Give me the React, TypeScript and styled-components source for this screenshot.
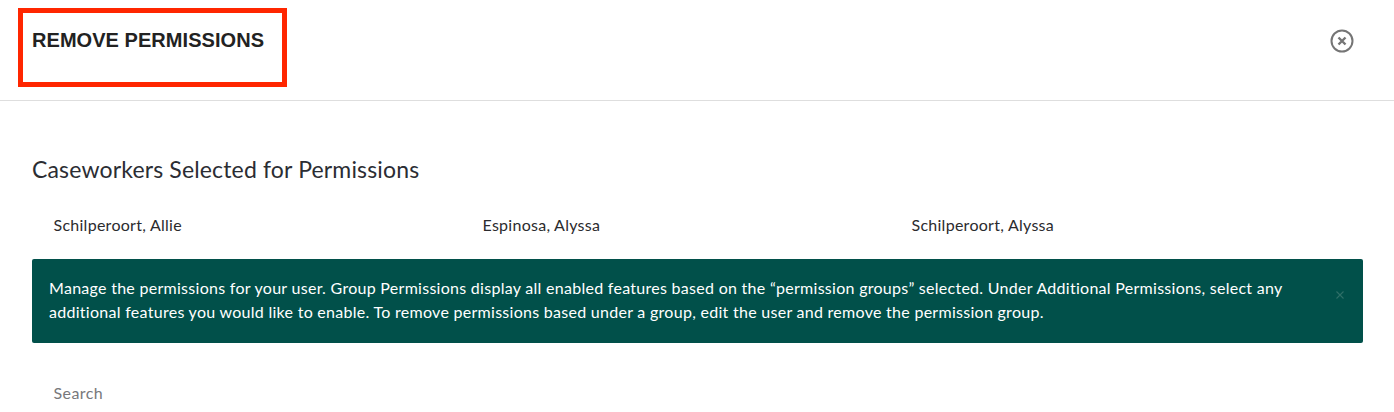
import React from "react";
import styled, { createGlobalStyle } from "styled-components";

const Global = createGlobalStyle`
  html, body { margin: 0; padding: 0; background: #fff; height: 412px; overflow: hidden; }
  body { font-family: Lato, "Open Sans", "Liberation Sans", sans-serif; color: #2b2b2e; }
`;
const Header = styled.header`
  position: relative;
  height: 100px;
  border-bottom: 1px solid #dedede;
  display: flex;
  justify-content: space-between;
  align-items: flex-start;
  padding: 0 40px 0 32px;
`;
const Title = styled.h1`
  margin: 28px 0 0;
  font: bold 20px/24px "Liberation Sans", Arial, sans-serif;
  letter-spacing: 0.05px;
  color: #222;
`;
const Annotation = styled.div`
  position: absolute;
  left: 18px;
  top: 8px;
  width: 269px;
  height: 79px;
  box-sizing: border-box;
  border: 5px solid #ff2600;
`;
const CloseButton = styled.button`
  margin: 29px 0 0;
  padding: 0;
  width: 24px;
  height: 24px;
  background: none;
  border: 0;
  display: block;
`;
const Body = styled.main`
  padding: 55px 31px 0 32px;
`;
const Heading = styled.h2`
  margin: 0;
  font-size: 23px;
  line-height: 26px;
  font-weight: 400;
  letter-spacing: 0.16px;
  color: #2b2d33;
`;
const Names = styled.ul`
  list-style: none;
  margin: 33px 0 0;
  padding: 0 0 0 21.5px;
  display: grid;
  grid-template-columns: 429px 429px 1fr;
  font-size: 16px;
  line-height: 20px;
  letter-spacing: 0.27px;
  color: #2b2b2e;
`;
const Alert = styled.div`
  position: relative;
  margin-top: 24px;
  box-sizing: border-box;
  height: 84px;
  background: #01504a;
  border-radius: 2px;
  color: #fff;
  padding: 17px 70px 0 17px;
  font-size: 16px;
  line-height: 24px;
  letter-spacing: 0.28px;
`;
const Dismiss = styled.span`
  position: absolute;
  right: 19px;
  top: 22px;
  width: 8px;
  height: 8px;
  display: block;
`;
const Search = styled.div`
  margin: 40px 0 0 21.5px;
  font-size: 16px;
  line-height: 20px;
  letter-spacing: 0.4px;
  color: #77787b;
`;

export default function App() {
  return (
    <>
      <Global />
      <Header>
        <Title>REMOVE PERMISSIONS</Title>
        <Annotation />
        <CloseButton aria-label="Close">
          <svg width="24" height="24" viewBox="0 0 24 24" fill="none" stroke="#757575">
            <circle cx="12" cy="12" r="10.5" strokeWidth="2" />
            <path d="M8.5 8.5l7 7M15.5 8.5l-7 7" strokeWidth="2.4" />
          </svg>
        </CloseButton>
      </Header>
      <Body>
        <Heading>Caseworkers Selected for Permissions</Heading>
        <Names>
          <li>Schilperoort, Allie</li>
          <li>Espinosa, Alyssa</li>
          <li>Schilperoort, Alyssa</li>
        </Names>
        <Alert>
          Manage the permissions for your user. Group Permissions display all enabled features based on the “permission groups” selected. Under Additional Permissions, select any additional features you would like to enable. To remove permissions based under a group, edit the user and remove the permission group.
          <Dismiss>
            <svg width="8" height="8" viewBox="0 0 8 8" fill="none" stroke="#2f6f68" strokeWidth="1.1">
              <path d="M0.5 0.5l7 7M7.5 0.5l-7 7" />
            </svg>
          </Dismiss>
        </Alert>
        <Search>Search</Search>
      </Body>
    </>
  );
}
